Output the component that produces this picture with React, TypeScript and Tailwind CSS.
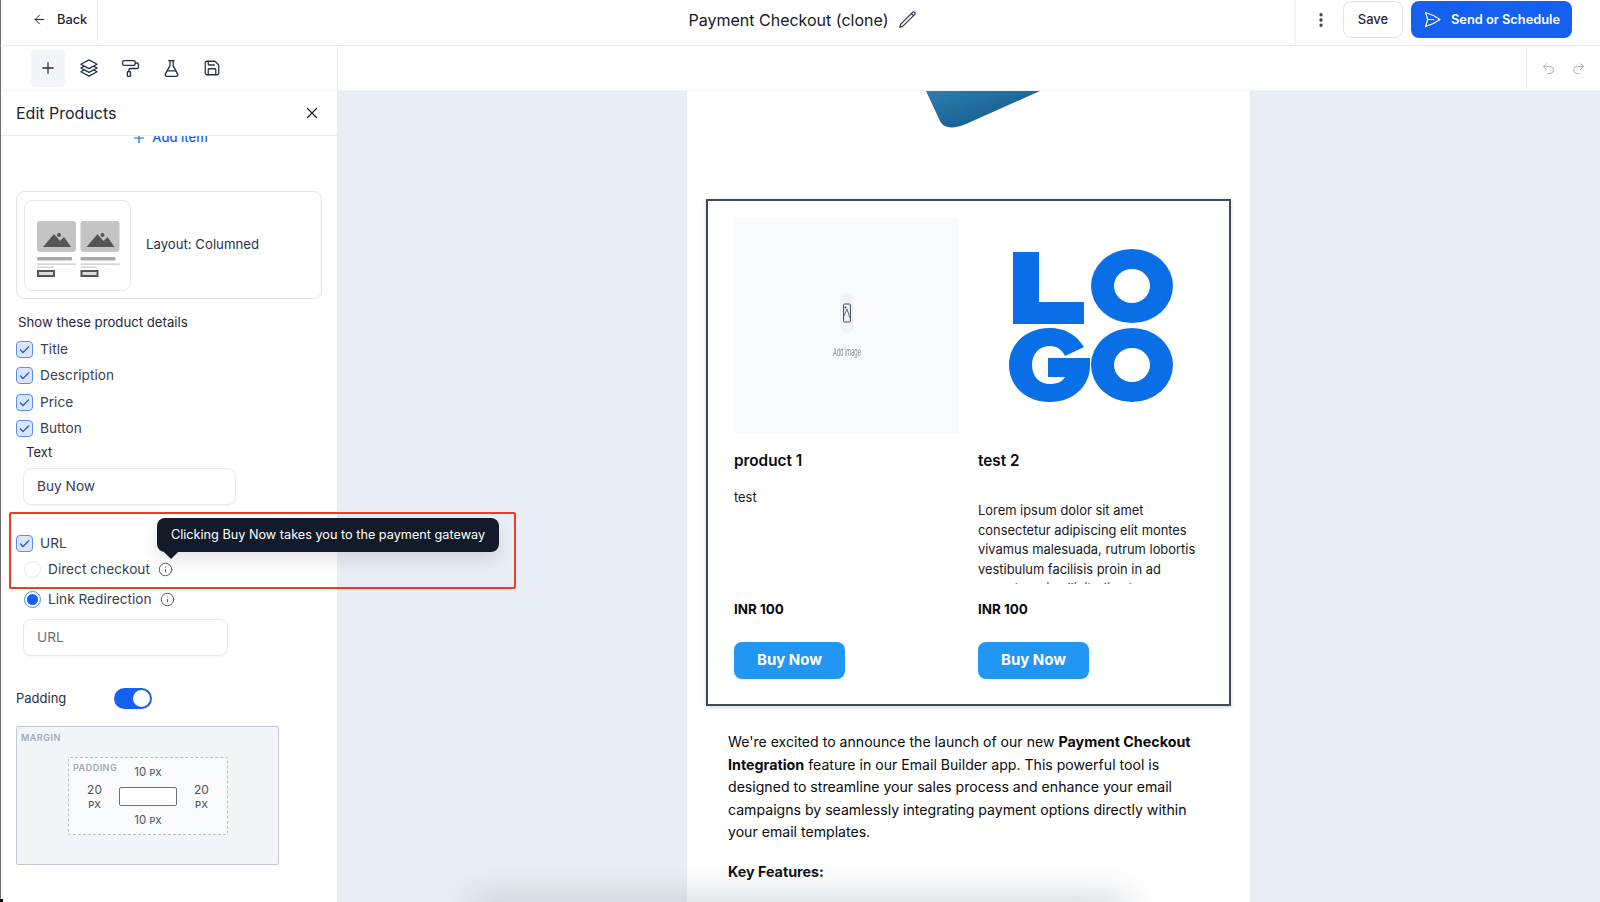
import { ArrowLeft, EllipsisVertical, FlaskConical, Info, PaintRoller, Plus, Redo2, Save, Undo2, X } from "lucide-react";
import { HiOutlinePaperAirplane, HiOutlinePencil, HiOutlineSquare3Stack3D } from "react-icons/hi2";

function LayoutThumb() {
  const columns = [0, 43.5];
  return (
    <svg width="107" height="91" viewBox="0 0 107 91" fill="none">
      {columns.map((x) => (
        <g key={x} transform={`translate(${x} 0)`}>
          <rect x="12" y="20" width="39" height="31" rx="3" fill="#c4c4c4" />
          <path d="M18 46 L29 33 L35 40 L39 36 L46 46 Z" fill="#555" />
          <circle cx="34" cy="34" r="2" fill="#555" />
          <rect x="12" y="56" width="35" height="3.5" rx="1" fill="#a8a8a8" />
          <rect x="12" y="62.5" width="39" height="1.2" fill="#c4c4c4" />
          <rect x="12" y="65.5" width="16" height="1.5" fill="#d4d4d4" />
          <rect x="13" y="70" width="16" height="5" fill="#ddd" stroke="#555" strokeWidth="2" />
        </g>
      ))}
    </svg>
  );
}

function CheckRow({ label }: { label: string }) {
  return (
    <div className="flex h-[18px] items-center gap-[7px] text-[13.7px] text-[#374151]">
      <span className="flex h-[17px] w-[17px] items-center justify-center rounded-[4px] border border-[#5b8cf5] bg-[#dbe6fe]">
        <svg width="11" height="9" viewBox="0 0 11 9" fill="none">
          <path d="M1 4.5 L4 7.5 L10 1.5" stroke="#1d5fe8" strokeWidth="1.3" />
        </svg>
      </span>
      {label}
    </div>
  );
}

function RadioRow({ label, checked }: { label: string; checked?: boolean }) {
  return (
    <div className="ml-[8px] flex h-[18px] items-center gap-[7px] text-[13.7px] text-[#374151]">
      {checked ? (
        <span className="flex h-[17px] w-[17px] items-center justify-center rounded-full border border-[#4f86f5]">
          <span className="h-[11px] w-[11px] rounded-full bg-[#1660ef]" />
        </span>
      ) : (
        <span className="h-[17px] w-[17px] rounded-full border border-[#e5e7eb] bg-white" />
      )}
      {label}
      <Info size={15} strokeWidth={1.5} className="ml-[1px] text-[#4b5563]" />
    </div>
  );
}

function PxValue({ value }: { value: number }) {
  return (
    <span className="text-[11.5px] leading-none text-[#4b5563]">
      {value} <span className="text-[9px] font-medium">PX</span>
    </span>
  );
}

function SidePx() {
  return (
    <div className="flex flex-col items-center gap-[4px] text-[12px] leading-none text-[#4b5563]">
      20
      <span className="text-[9.5px] font-medium">PX</span>
    </div>
  );
}

function LogoMark() {
  return (
    <svg width="225" height="215" viewBox="0 0 225 215">
      <path d="M35 34 H61 V84 H106 V106 H35 Z" fill="#0a6fe6" />
      <ellipse cx="154" cy="68" rx="41" ry="37" fill="#0a6fe6" />
      <ellipse cx="154" cy="68" rx="18" ry="17" fill="#fff" />
      <ellipse cx="154" cy="147" rx="41" ry="37" fill="#0a6fe6" />
      <ellipse cx="154" cy="147" rx="18" ry="17" fill="#fff" />
      <path
        d="M106 129 C98 116 86 110 72 110 C48 110 31 126 31 147 C31 168 48 184 72 184 C95 184 112 168 112 148 V140 H70 V159 H87 C84 164 79 166 72 166 C61 166 54 158 54 147 C54 136 61 128 72 128 C79 128 84 132 87 138 Z"
        fill="#0a6fe6"
      />
    </svg>
  );
}

function ProductCard({ title, lines, logo }: { title: string; lines: string[]; logo?: boolean }) {
  return (
    <div className="w-[225px]">
      <div className="flex h-[215px] flex-col items-center justify-center">
        {logo ? (
          <LogoMark />
        ) : (
          <div className="flex h-full w-full flex-col items-center justify-center bg-[#f9fafb]">
            <span className="flex h-[40px] w-[14px] items-center justify-center rounded-full bg-[#f0f1f4]">
              <svg width="8" height="20" viewBox="0 0 8 20" fill="none">
                <rect x="0.6" y="1" width="6.8" height="18" rx="1" stroke="#3f4a5f" strokeWidth="1" />
                <path d="M1 13 L4 6 L7 15" stroke="#3f4a5f" strokeWidth="0.8" />
                <circle cx="2.5" cy="4.5" r="1" fill="#3f4a5f" />
              </svg>
            </span>
            <span className="mt-[14px] scale-x-[0.5] text-[11px] leading-none text-[#8a8f99]">Add image</span>
          </div>
        )}
      </div>
      <div className="mt-[18px] h-[20px] text-[15.3px] font-semibold leading-[20px] text-[#0b0b0c]">{title}</div>
      <div className="mt-[17px] h-[96px] overflow-hidden text-[12.9px] leading-[19.6px] text-[#17191d]">
        {lines.map((line, i) => (
          <div key={i} className={line === "" ? "h-[13px]" : ""}>
            {line}
          </div>
        ))}
      </div>
      <div className="mt-[15px] text-[13.4px] font-bold leading-[20px] text-[#0b0b0c]">INR 100</div>
      <button className="mt-[23px] block h-[37px] w-[111px] rounded-[8px] bg-[#2196f3] text-[15px] font-bold text-white">
        Buy Now
      </button>
    </div>
  );
}

export default function App() {
  return (
    <div className="relative flex h-[902px] w-[1600px] flex-col overflow-hidden bg-white font-['Inter',sans-serif]">
      {/* Header */}
      <header className="flex h-[46px] flex-none items-stretch border-b border-l border-[#e8eaee] border-l-[#6b6b6b] bg-white">
        <div className="flex w-[97px] items-center gap-[10px] border-r border-[#eef0f3] pb-[6px] pl-[31px] text-[12.8px] font-medium text-[#1f2937]">
          <ArrowLeft size={15} strokeWidth={1.6} />
          Back
        </div>
        <div className="flex flex-1 items-center justify-center gap-[9px] pb-[6px] pl-[212px] text-[16px] text-[#15181e]">
          Payment Checkout (clone)
          <HiOutlinePencil size={19} className="text-[#2a3350]" />
        </div>
        <div className="flex items-center border-l border-[#eef0f3] pb-[6px] pl-[16px] pr-[28px]">
          <EllipsisVertical size={18} strokeWidth={2.4} className="mr-[13px] text-[#374151]" />
          <button className="h-[37px] w-[60px] rounded-[8px] border border-[#dfe3ea] bg-white text-[13px] font-medium text-[#1f2937]">
            Save
          </button>
          <button className="ml-[8px] flex h-[37px] w-[161px] items-center justify-center gap-[9px] rounded-[8px] bg-[#1660ef] text-[12.8px] font-semibold text-white">
            <HiOutlinePaperAirplane size={19} />
            Send or Schedule
          </button>
        </div>
      </header>

      <div className="flex min-h-0 flex-1">
        {/* Left column */}
        <aside className="flex w-[338px] flex-none flex-col border-l border-r border-[#eceef2] border-l-[#6b6b6b] bg-white">
          <div className="flex h-[45px] flex-none items-center border-b border-[#f3f4f6] pl-[30px] text-[#27324a]">
            <span className="flex h-[37px] w-[34px] items-center justify-center rounded-[4px] bg-[#f3f4f8]">
              <Plus size={18} strokeWidth={1.7} />
            </span>
            <HiOutlineSquare3Stack3D size={20} className="ml-[14px]" />
            <PaintRoller size={19} strokeWidth={1.7} className="ml-[22px]" />
            <FlaskConical size={19} strokeWidth={1.7} className="ml-[22px]" />
            <Save size={18} strokeWidth={1.7} className="ml-[22px]" />
          </div>
          <div className="flex h-[45px] flex-none items-center justify-between border-b border-[#e8eaee] pl-[15px] pr-[16px] text-[#1a2233]">
            <span className="text-[16px]">Edit Products</span>
            <X size={18} strokeWidth={1.7} />
          </div>
          <div className="min-h-0 flex-1 overflow-hidden pl-[15px]">
            <div className="-mt-[8px] flex h-[20px] items-center justify-center gap-[5px] pr-[14px] text-[13px] font-medium text-[#1660ef]">
              <Plus size={16} strokeWidth={1.8} />
              Add item
            </div>
            <div className="mt-[43px] flex h-[108px] w-[306px] items-center rounded-[8px] border border-[#dfe3ea] pl-[7px]">
              <div className="h-[91px] w-[107px] rounded-[8px] border border-[#e5e7eb]">
                <LayoutThumb />
              </div>
              <span className="ml-[15px] text-[13.2px] text-[#27324a]">Layout: Columned</span>
            </div>
            <div className="ml-[2px] mt-[13px] h-[20px] text-[13.2px] leading-[20px] text-[#1f2937]">
              Show these product details
            </div>
            <div className="mt-[8px] flex flex-col gap-[8.5px]">
              <CheckRow label="Title" />
              <CheckRow label="Description" />
              <CheckRow label="Price" />
              <CheckRow label="Button" />
            </div>
            <div className="ml-[10px] mt-[4px] h-[20px] text-[13px] leading-[20px] text-[#1f2937]">Text</div>
            <div className="ml-[7px] mt-[6px] flex h-[37px] w-[213px] items-center rounded-[8px] border border-[#e5e7eb] pl-[13px] text-[13.7px] text-[#374151] shadow-[0_1px_2px_rgba(0,0,0,0.04)]">
              Buy Now
            </div>
            <div className="mt-[30px] flex flex-col gap-[8px]">
              <CheckRow label="URL" />
              <RadioRow label="Direct checkout" />
            </div>
            <div className="mt-[12px]">
              <RadioRow label="Link Redirection" checked />
            </div>
            <div className="ml-[7px] mt-[10px] flex h-[37px] w-[205px] items-center rounded-[8px] border border-[#e5e7eb] pl-[13px] text-[13.7px] text-[#667085] shadow-[0_1px_2px_rgba(0,0,0,0.04)]">
              URL
            </div>
            <div className="mt-[33px] flex h-[20px] items-center text-[13px] text-[#27324a]">
              <span className="w-[98px]">Padding</span>
              <span className="flex h-[21px] w-[38px] items-center justify-end rounded-full bg-[#1660ef] pr-[2px]">
                <span className="h-[17px] w-[17px] rounded-full bg-white" />
              </span>
            </div>
            <div className="relative mt-[17px] h-[139px] w-[263px] rounded-[2px] border border-[#c3c8d2] bg-[#f3f4f8] pl-[51px] pt-[30px]">
              <span className="absolute left-[4px] top-[5px] text-[9px] font-semibold leading-[12px] tracking-[0.5px] text-[#a3a9b6]">
                MARGIN
              </span>
              <div className="relative flex h-[78px] w-[160px] flex-col items-center rounded-[2px] border border-dashed border-[#b9bec9] bg-[#f9fafb] pt-[9px]">
                <span className="absolute left-[4px] top-[4px] text-[9px] font-semibold leading-[12px] tracking-[0.5px] text-[#a3a9b6]">
                  PADDING
                </span>
                <PxValue value={10} />
                <div className="mt-[6px] flex items-center gap-[17px]">
                  <SidePx />
                  <span className="h-[19px] w-[58px] rounded-[2px] border border-[#6b7280] bg-white" />
                  <SidePx />
                </div>
                <div className="-mt-[4px]">
                  <PxValue value={10} />
                </div>
              </div>
            </div>
          </div>
        </aside>

        {/* Canvas */}
        <main className="flex min-w-0 flex-1 flex-col">
          <div className="flex h-[45px] flex-none items-center justify-end border-b border-[#f3f4f6] bg-white text-[#a3a9b3]">
            <div className="flex h-full w-[74px] items-center gap-[15px] border-l border-[#f0f1f4] pl-[14px]">
              <Undo2 size={15} strokeWidth={1.5} />
              <Redo2 size={15} strokeWidth={1.5} />
            </div>
          </div>
          <div className="flex min-h-0 flex-1 justify-center overflow-hidden bg-[#e9eef6] pr-[1px]">
            <div className="h-[1100px] w-[563px] flex-none bg-white pl-[19px]">
              <svg width="116" height="38" viewBox="0 0 116 38" className="ml-[220px]">
                <defs>
                  <linearGradient id="shape" x1="0" y1="0" x2="1" y2="1">
                    <stop offset="0" stopColor="#2d7fae" />
                    <stop offset="1" stopColor="#0f5288" />
                  </linearGradient>
                </defs>
                <path d="M0 0 H114 L40 33 C28 38 18 38 14 30 Z" fill="url(#shape)" />
              </svg>
              <div className="mt-[70px] flex h-[507px] w-[525px] gap-[19px] border-2 border-[#3f4a5a] bg-white pl-[26px] pt-[17px] shadow-[0_1px_4px_rgba(0,0,0,0.2)]">
                <ProductCard title="product 1" lines={["test"]} />
                <ProductCard
                  logo
                  title="test 2"
                  lines={[
                    "",
                    "Lorem ipsum dolor sit amet",
                    "consectetur adipiscing elit montes",
                    "vivamus malesuada, rutrum lobortis",
                    "vestibulum facilisis proin in ad",
                    "nascetur mi sollicitudin at",
                  ]}
                />
              </div>
              <div className="ml-[22px] mt-[25px] w-[470px] text-[14.1px] leading-[22.5px] text-[#0b0b0c]">
                <p>
                  We're excited to announce the launch of our new <b className="text-[14.3px] font-bold">Payment Checkout Integration</b> feature in our Email Builder app. This powerful tool is designed to streamline your sales process and enhance your email campaigns by seamlessly integrating payment options directly within your email templates.
                </p>
                <p className="mt-[17px] text-[14.3px] font-bold">Key Features:</p>
              </div>
            </div>
          </div>
        </main>
      </div>

      {/* Annotation over the panel */}
      <div className="pointer-events-none absolute left-[9px] top-[512px] h-[77px] w-[507px] rounded-[2px] border-2 border-[#f03a22]" />
      <div className="absolute left-[157px] top-[518px] flex h-[34px] w-[342px] items-center justify-center rounded-[8px] bg-[#131a2a] text-[12.7px] text-white shadow-[0_8px_16px_rgba(30,40,60,0.12)]">
        Clicking Buy Now takes you to the payment gateway
        <span className="absolute bottom-[-5px] left-[9px] h-[10px] w-[10px] rotate-45 bg-[#131a2a]" />
      </div>
      <div className="pointer-events-none absolute left-[470px] top-[905px] h-[20px] w-[660px] rounded-full bg-[#aab0b8] blur-[20px]" />
      <div className="absolute bottom-0 left-0 h-[3px] w-[3px] bg-black" />
    </div>
  );
}
